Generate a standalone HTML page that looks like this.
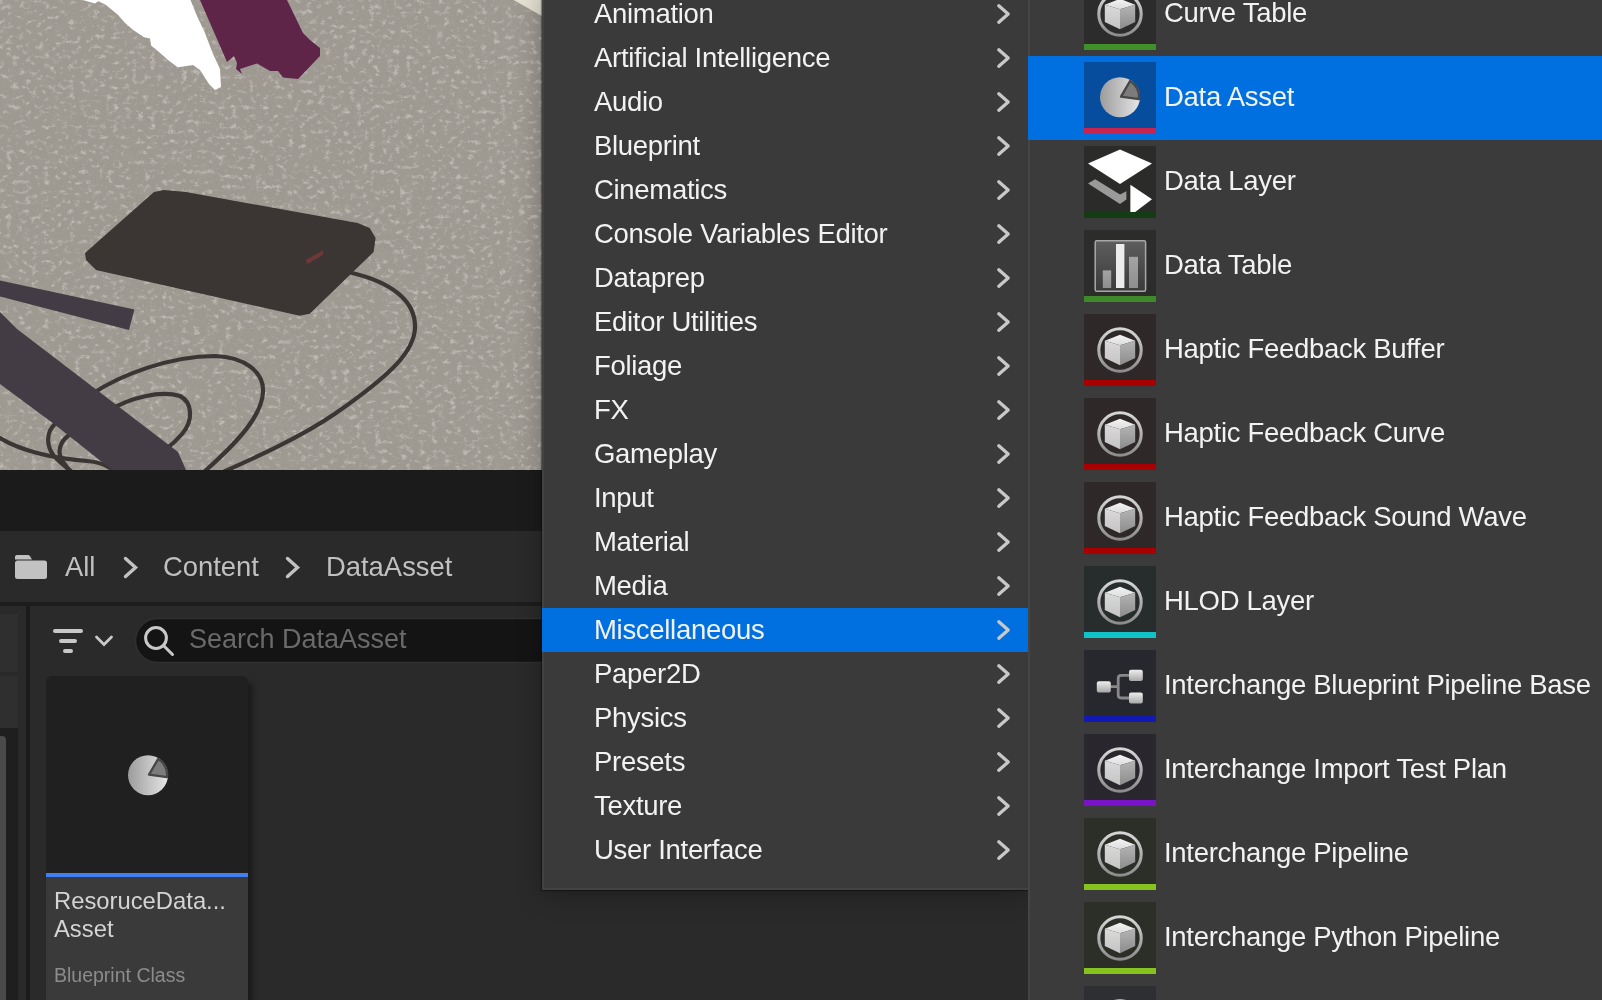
<!DOCTYPE html>
<html><head><meta charset="utf-8">
<style>
*{margin:0;padding:0;box-sizing:border-box}
html,body{-webkit-font-smoothing:antialiased;width:1602px;height:1000px;overflow:hidden;background:#232323;font-family:"Liberation Sans",sans-serif}
.a{position:absolute}
#vp{left:0;top:0;width:542px;height:470px;background:#a6a199;overflow:hidden}
#vp svg{display:block}
#dbar{left:0;top:470px;width:542px;height:61px;background:#1b1b1b}
#crumb{left:0;top:531px;width:542px;height:71px;background:#2a2a2a}
#sep{left:0;top:602px;width:542px;height:4px;background:#1d1d1d}
#left{left:0;top:606px;width:26px;height:394px;background:#2a2a2a;overflow:hidden}
#vsep{left:26px;top:606px;width:4px;height:394px;background:#1b1b1b}
#main{left:30px;top:606px;width:1000px;height:394px;background:#2a2a2a;overflow:hidden}
#tile{left:16px;top:70px;width:202px;height:330px}
.ct{will-change:transform;color:#c0c0c0;font-size:27.4px;line-height:30px;white-space:nowrap}
#m1{left:542px;top:-10px;width:488px;height:900px;background:#3a3a3a;border:2px solid #424242;border-top:none;box-shadow:0 4px 24px rgba(0,0,0,.3),0 0 1px 1px rgba(0,0,0,.35)}
#m1 .mi{position:absolute;left:-2px;width:486px;height:44px;line-height:44px;font-size:27.5px;letter-spacing:-0.3px;color:#f2f2f2;white-space:nowrap;margin-top:10px}
.mi span{will-change:transform;position:absolute;left:52px;top:0}
#m2{left:1028px;top:0;width:574px;height:1000px;background:#3b3b3b;overflow:hidden}
.hl{background:#0070e0}
.ri{position:absolute;left:0;width:574px;height:84px}
.ri .ic{position:absolute;left:56px;top:6px;width:72px;height:72px}
.ri .ic svg{position:absolute;left:0;top:0}
.ri .bar{position:absolute;left:0;top:66px;width:72px;height:6px}
.ri span{will-change:transform;position:absolute;left:136px;top:-1.5px;line-height:84px;font-size:27.5px;letter-spacing:-0.3px;color:#f2f2f2;white-space:nowrap}

.gs{will-change:transform}

</style></head><body>
<svg width="0" height="0" style="position:absolute">
<defs>
<linearGradient id="gTop" x1="0" y1="0" x2="0" y2="1"><stop offset="0" stop-color="#f4f4f4"/><stop offset="1" stop-color="#dcdcdc"/></linearGradient>
<linearGradient id="gL" x1="0" y1="0" x2="0" y2="1"><stop offset="0" stop-color="#dadada"/><stop offset="1" stop-color="#c4c4c4"/></linearGradient>
<linearGradient id="gR" x1="0" y1="0" x2="0" y2="1"><stop offset="0" stop-color="#b4b4b4"/><stop offset="1" stop-color="#8c8c8c"/></linearGradient>
<linearGradient id="gRing" x1="0" y1="0" x2="0" y2="1"><stop offset="0" stop-color="#d6d6d6"/><stop offset="1" stop-color="#8c8c8c"/></linearGradient>
<linearGradient id="gPie" x1="0" y1="0" x2="1" y2="0"><stop offset="0" stop-color="#9c9c9c"/><stop offset="1" stop-color="#e6e6e6"/></linearGradient>
<linearGradient id="gTab" x1="0" y1="0" x2="0" y2="1"><stop offset="0" stop-color="#5e5e5e"/><stop offset="1" stop-color="#3a3a3a"/></linearGradient>
<linearGradient id="gBar" x1="0" y1="0" x2="0" y2="1"><stop offset="0" stop-color="#a4a4a4"/><stop offset="1" stop-color="#8e8e8e"/></linearGradient>
<linearGradient id="gBox" x1="0" y1="0" x2="0" y2="1"><stop offset="0" stop-color="#eeeeee"/><stop offset="1" stop-color="#a8a8a8"/></linearGradient>
<g id="i-cube">
 <circle cx="36" cy="36" r="21.2" fill="none" stroke="url(#gRing)" stroke-width="3.1"/>
 <path d="M36 20.8 L51.2 26.8 L36 31.2 L20.8 26.8 Z" fill="url(#gTop)"/>
 <path d="M20.8 26.8 L36 31.2 L36 51.2 L20.8 44 Z" fill="url(#gL)"/>
 <path d="M51.2 26.8 L36 31.2 L36 51.2 L51.2 44 Z" fill="url(#gR)"/>
</g>
<g id="i-pie">
 <circle cx="36.0" cy="35.2" r="20" fill="url(#gPie)"/>
 <path d="M37.00 34.60 L46.18 18.91 A18.9 18.9 0 0 1 55.08 37.16 Z" fill="#7c7c7c" stroke="#474747" stroke-width="2.3" stroke-linejoin="round"/>
</g>
<g id="i-layer">
 <path d="M36 3.6 L68 17.6 L36 38 L4 17.6 Z" fill="#ffffff"/>
 <path d="M4 37.6 L11.2 33.2 L36 48.4 L42.4 45.2 L42.4 53.6 L36 58 Z" fill="#9a9a9a"/>
 <path d="M46.4 38.8 L68 53.2 L51.2 66 L46.4 66 Z" fill="#ffffff"/>
</g>
<g id="i-table">
 <rect x="11.2" y="10.8" width="50.4" height="50.4" rx="1.5" fill="url(#gTab)" stroke="#a8a8a8" stroke-width="1.5"/>
 <rect x="18.8" y="40.4" width="8.4" height="17.6" fill="url(#gBar)"/>
 <rect x="32" y="14" width="8.4" height="44" fill="#ececec"/>
 <rect x="45" y="26.8" width="9" height="31.2" fill="url(#gBar)"/>
</g>
<g id="i-graph">
 <path d="M26 36.6 L34.2 36.6 M46 25.4 L37.2 25.4 Q34.2 25.4 34.2 28.4 L34.2 45 Q34.2 48 37.2 48 L46 48" fill="none" stroke="#888888" stroke-width="2.8"/>
 <rect x="12.8" y="31.2" width="14" height="11.2" rx="2" fill="url(#gBox)"/>
 <rect x="45" y="19.8" width="13.8" height="11.2" rx="2" fill="url(#gBox)"/>
 <rect x="45" y="42.4" width="13.8" height="11.2" rx="2" fill="url(#gBox)"/>
</g>
</defs></svg>

<div class="a" id="vp"><svg width="542" height="470" viewBox="0 0 542 470">
 <defs>
  <filter id="nz" x="0" y="0" width="100%" height="100%">
   <feTurbulence type="fractalNoise" baseFrequency="0.16 0.2" numOctaves="3" seed="11" result="t"/>
   <feColorMatrix in="t" type="matrix" values="0 0 0 0 0.82  0 0 0 0 0.81  0 0 0 0 0.79  3.6 0 0 0 -1.95" result="w"/>
   <feTurbulence type="fractalNoise" baseFrequency="0.5" numOctaves="1" seed="5" result="t2"/>
   <feColorMatrix in="t2" type="matrix" values="0 0 0 0 0.3  0 0 0 0 0.28  0 0 0 0 0.26  0 -7 0 0 2.62" result="k"/>
   <feTurbulence type="fractalNoise" baseFrequency="0.06" numOctaves="2" seed="2" result="t3"/>
   <feColorMatrix in="t3" type="matrix" values="0 0 0 0 0.45  0 0 0 0 0.43  0 0 0 0 0.4  0 0 -1.2 0 0.55" result="m"/>
   <feMerge><feMergeNode in="m"/><feMergeNode in="w"/><feMergeNode in="k"/></feMerge>
  </filter>
 </defs>
 <rect width="542" height="470" fill="#9e9991"/>
 <rect width="542" height="470" fill="#000" filter="url(#nz)" opacity="0.42"/>
 <path d="M513.6 0 L542 0 L542 16 Z" fill="#e4e1d2"/>
 <path d="M82.8 0 L94.8 3.6 L98.4 1.2 L105.6 4.8 L117.6 14.4 L124.8 22.8 L133.2 30 L144 37.2 L150 38.4 L151.2 45.6 L158.4 51.6 L168 60 L177.6 67.2 L180 67 L193 65 L200 70 L209 84 L215 90 L221 87 L220 69 L213 54 L205 33 L197 16 L190.5 0 Z" fill="#ffffff"/>
 <path d="M200 0 L227 62 L234 56 L237 63 L236 69 L242 74 L240 69 L257 63.5 L270 71 L278 71 L283 77.5 L298 79 L320 56 L320 48 L310 40 L303 33 L287 0 Z" fill="#5e2548"/>
 <path d="M85 253 L154 192 L164 190 L186 192 L357.7 223 L369.7 228 L375.6 238 L373.6 252 L309.7 313.8 L299.7 315.8 L96 270 L86 260 Z" fill="#3b3634"/>
 <path d="M305.7 260 L323.7 250 L322.7 255 L307.7 264 Z" fill="#6e3838"/>
 <g fill="none" stroke="#3b3634" stroke-width="4.2" stroke-linecap="round">
  <path d="M352 273 C390 282, 416 300, 415 328 C414 350, 395 372, 336 413 C300 438, 250 460, 214 476"/>
  <path d="M92 394 C120 375, 170 356, 215 356 C245 357, 264 372, 263 392 C262 415, 240 440, 204 472"/>
  <path d="M110 410 C130 398, 160 390, 180 396 C192 402, 194 420, 182 434 C176 441, 170 446, 166 449"/>
  <path d="M0 438 C20 450, 50 458, 87 461 C100 462, 108 465, 115 472"/>
  <path d="M55 424 C46 432, 46 446, 54 456 C60 463, 66 467, 72 472"/>
  <path d="M68 436 C60 442, 57 452, 62 460 C65 465, 68 468, 70 472"/>
 </g>
 <path d="M0 280.4 L134.4 309.5 L129 330 L0 296.6 Z" fill="#433c45"/>
 <path d="M0 312 L17 329 L178 452 L186 470 L112 470 L54 424 L0 384 Z" fill="#433c45"/>
</svg>
</div>
<div class="a" id="dbar"></div>
<div class="a" id="crumb">
 <svg class="a" style="left:0;top:0" width="542" height="71" viewBox="0 0 542 71">
  <path d="M15 28.4 L15 26 Q15 24 17 24 L28 24 Q29.2 24 30 25.2 L32 28.4 Z" fill="#c2c2c2"/>
  <rect x="15" y="29.6" width="32" height="18.4" rx="2.5" fill="#c2c2c2"/>
  <path d="M125.5 27.5 L135.5 36.5 L125.5 45.5" fill="none" stroke="#c2c2c2" stroke-width="3.4" stroke-linecap="round"/>
  <path d="M287.5 27.5 L297.5 36.5 L287.5 45.5" fill="none" stroke="#c2c2c2" stroke-width="3.4" stroke-linecap="round"/>
 </svg>
 <span class="a ct" style="left:64.5px;top:21px">All</span>
 <span class="a ct" style="left:163px;top:21px">Content</span>
 <span class="a ct" style="left:325.5px;top:21px">DataAsset</span>
</div>
<div class="a" id="sep"></div>
<div class="a" id="left">
 <div class="a" style="left:0;top:8px;width:18px;height:58px;background:#2f2f2f"></div>
 <div class="a" style="left:0;top:70px;width:18px;height:52px;background:#2f2f2f"></div>
 <div class="a" style="left:0;top:122px;width:18px;height:272px;background:#1f1f1f"></div>
 <div class="a" style="left:-6px;top:130px;width:12px;height:270px;background:#4a4a4a;border-radius:4px"></div>
</div>
<div class="a" id="vsep"></div>
<div class="a" id="main">
 <svg class="a" style="left:0;top:0" width="512" height="394" viewBox="30 606 512 394">
  <path d="M55 631 L81 631 M61 641 L75 641 M65 651 L71 651" stroke="#c8c8c8" stroke-width="4" stroke-linecap="round"/>
  <path d="M96.5 637 L104 644.5 L111.5 637" fill="none" stroke="#c8c8c8" stroke-width="2.8" stroke-linecap="round"/>
  <rect x="135.5" y="618.5" width="450" height="44" rx="22" fill="#141414" stroke="#303030" stroke-width="1.5"/>
  <circle cx="156" cy="638" r="10.4" fill="none" stroke="#c8c8c8" stroke-width="3"/>
  <path d="M163.5 645.5 L172.5 654.5" stroke="#c8c8c8" stroke-width="3" stroke-linecap="round"/>
 </svg>
 <span class="a gs" style="left:159px;top:18px;font-size:27px;line-height:30px;color:#6a6a6a;white-space:nowrap">Search DataAsset</span>
 <div class="a" id="tile">
  <div class="a" style="left:0;top:0;width:202px;height:330px;background:#202020;border-radius:6px 6px 0 0;box-shadow:5px 6px 5px rgba(0,0,0,.35)"></div>
  <svg class="a" style="left:65.5px;top:64px" width="72" height="72" viewBox="0 0 72 72"><use href="#i-pie"/></svg>
  <div class="a" style="left:0;top:197px;width:202px;height:4px;background:#3f7ff2"></div>
  <div class="a" style="left:0;top:201px;width:202px;height:200px;background:#3a3a3a"></div>
  <div class="a gs" style="left:8.3px;top:210.5px;font-size:23.8px;line-height:28px;color:#d4d4d4;white-space:nowrap">ResoruceData...<br>Asset</div>
  <div class="a gs" style="left:8.3px;top:288px;font-size:19.5px;line-height:22px;color:#8c8c8c;white-space:nowrap">Blueprint Class</div>
 </div>
</div>

<div class="a" id="m1">
<div class="mi" style="top:-8px"><span>Animation</span><svg class="chev" width="20" height="24" viewBox="0 0 20 24" style="position:absolute;left:450px;top:10px"><path d="M6.8 3.8 L16.2 12 L6.8 20.2" fill="none" stroke="#c8c8c8" stroke-width="3.3" stroke-linecap="round" stroke-linejoin="round"/></svg></div><div class="mi" style="top:36px"><span>Artificial Intelligence</span><svg class="chev" width="20" height="24" viewBox="0 0 20 24" style="position:absolute;left:450px;top:10px"><path d="M6.8 3.8 L16.2 12 L6.8 20.2" fill="none" stroke="#c8c8c8" stroke-width="3.3" stroke-linecap="round" stroke-linejoin="round"/></svg></div><div class="mi" style="top:80px"><span>Audio</span><svg class="chev" width="20" height="24" viewBox="0 0 20 24" style="position:absolute;left:450px;top:10px"><path d="M6.8 3.8 L16.2 12 L6.8 20.2" fill="none" stroke="#c8c8c8" stroke-width="3.3" stroke-linecap="round" stroke-linejoin="round"/></svg></div><div class="mi" style="top:124px"><span>Blueprint</span><svg class="chev" width="20" height="24" viewBox="0 0 20 24" style="position:absolute;left:450px;top:10px"><path d="M6.8 3.8 L16.2 12 L6.8 20.2" fill="none" stroke="#c8c8c8" stroke-width="3.3" stroke-linecap="round" stroke-linejoin="round"/></svg></div><div class="mi" style="top:168px"><span>Cinematics</span><svg class="chev" width="20" height="24" viewBox="0 0 20 24" style="position:absolute;left:450px;top:10px"><path d="M6.8 3.8 L16.2 12 L6.8 20.2" fill="none" stroke="#c8c8c8" stroke-width="3.3" stroke-linecap="round" stroke-linejoin="round"/></svg></div><div class="mi" style="top:212px"><span>Console Variables Editor</span><svg class="chev" width="20" height="24" viewBox="0 0 20 24" style="position:absolute;left:450px;top:10px"><path d="M6.8 3.8 L16.2 12 L6.8 20.2" fill="none" stroke="#c8c8c8" stroke-width="3.3" stroke-linecap="round" stroke-linejoin="round"/></svg></div><div class="mi" style="top:256px"><span>Dataprep</span><svg class="chev" width="20" height="24" viewBox="0 0 20 24" style="position:absolute;left:450px;top:10px"><path d="M6.8 3.8 L16.2 12 L6.8 20.2" fill="none" stroke="#c8c8c8" stroke-width="3.3" stroke-linecap="round" stroke-linejoin="round"/></svg></div><div class="mi" style="top:300px"><span>Editor Utilities</span><svg class="chev" width="20" height="24" viewBox="0 0 20 24" style="position:absolute;left:450px;top:10px"><path d="M6.8 3.8 L16.2 12 L6.8 20.2" fill="none" stroke="#c8c8c8" stroke-width="3.3" stroke-linecap="round" stroke-linejoin="round"/></svg></div><div class="mi" style="top:344px"><span>Foliage</span><svg class="chev" width="20" height="24" viewBox="0 0 20 24" style="position:absolute;left:450px;top:10px"><path d="M6.8 3.8 L16.2 12 L6.8 20.2" fill="none" stroke="#c8c8c8" stroke-width="3.3" stroke-linecap="round" stroke-linejoin="round"/></svg></div><div class="mi" style="top:388px"><span>FX</span><svg class="chev" width="20" height="24" viewBox="0 0 20 24" style="position:absolute;left:450px;top:10px"><path d="M6.8 3.8 L16.2 12 L6.8 20.2" fill="none" stroke="#c8c8c8" stroke-width="3.3" stroke-linecap="round" stroke-linejoin="round"/></svg></div><div class="mi" style="top:432px"><span>Gameplay</span><svg class="chev" width="20" height="24" viewBox="0 0 20 24" style="position:absolute;left:450px;top:10px"><path d="M6.8 3.8 L16.2 12 L6.8 20.2" fill="none" stroke="#c8c8c8" stroke-width="3.3" stroke-linecap="round" stroke-linejoin="round"/></svg></div><div class="mi" style="top:476px"><span>Input</span><svg class="chev" width="20" height="24" viewBox="0 0 20 24" style="position:absolute;left:450px;top:10px"><path d="M6.8 3.8 L16.2 12 L6.8 20.2" fill="none" stroke="#c8c8c8" stroke-width="3.3" stroke-linecap="round" stroke-linejoin="round"/></svg></div><div class="mi" style="top:520px"><span>Material</span><svg class="chev" width="20" height="24" viewBox="0 0 20 24" style="position:absolute;left:450px;top:10px"><path d="M6.8 3.8 L16.2 12 L6.8 20.2" fill="none" stroke="#c8c8c8" stroke-width="3.3" stroke-linecap="round" stroke-linejoin="round"/></svg></div><div class="mi" style="top:564px"><span>Media</span><svg class="chev" width="20" height="24" viewBox="0 0 20 24" style="position:absolute;left:450px;top:10px"><path d="M6.8 3.8 L16.2 12 L6.8 20.2" fill="none" stroke="#c8c8c8" stroke-width="3.3" stroke-linecap="round" stroke-linejoin="round"/></svg></div><div class="mi hl" style="top:608px"><span>Miscellaneous</span><svg class="chev" width="20" height="24" viewBox="0 0 20 24" style="position:absolute;left:450px;top:10px"><path d="M6.8 3.8 L16.2 12 L6.8 20.2" fill="none" stroke="#c8c8c8" stroke-width="3.3" stroke-linecap="round" stroke-linejoin="round"/></svg></div><div class="mi" style="top:652px"><span>Paper2D</span><svg class="chev" width="20" height="24" viewBox="0 0 20 24" style="position:absolute;left:450px;top:10px"><path d="M6.8 3.8 L16.2 12 L6.8 20.2" fill="none" stroke="#c8c8c8" stroke-width="3.3" stroke-linecap="round" stroke-linejoin="round"/></svg></div><div class="mi" style="top:696px"><span>Physics</span><svg class="chev" width="20" height="24" viewBox="0 0 20 24" style="position:absolute;left:450px;top:10px"><path d="M6.8 3.8 L16.2 12 L6.8 20.2" fill="none" stroke="#c8c8c8" stroke-width="3.3" stroke-linecap="round" stroke-linejoin="round"/></svg></div><div class="mi" style="top:740px"><span>Presets</span><svg class="chev" width="20" height="24" viewBox="0 0 20 24" style="position:absolute;left:450px;top:10px"><path d="M6.8 3.8 L16.2 12 L6.8 20.2" fill="none" stroke="#c8c8c8" stroke-width="3.3" stroke-linecap="round" stroke-linejoin="round"/></svg></div><div class="mi" style="top:784px"><span>Texture</span><svg class="chev" width="20" height="24" viewBox="0 0 20 24" style="position:absolute;left:450px;top:10px"><path d="M6.8 3.8 L16.2 12 L6.8 20.2" fill="none" stroke="#c8c8c8" stroke-width="3.3" stroke-linecap="round" stroke-linejoin="round"/></svg></div><div class="mi" style="top:828px"><span>User Interface</span><svg class="chev" width="20" height="24" viewBox="0 0 20 24" style="position:absolute;left:450px;top:10px"><path d="M6.8 3.8 L16.2 12 L6.8 20.2" fill="none" stroke="#c8c8c8" stroke-width="3.3" stroke-linecap="round" stroke-linejoin="round"/></svg></div>
</div>

<div class="a" id="m2">
<div class="a" style="left:0;top:0;width:2px;height:1000px;background:#454545"></div>
<div class="ri" style="top:-28px"><div class="ic" style="background:#2c2c2c"><svg width="72" height="66" viewBox="0 0 72 66"><use href="#i-cube"/></svg><div class="bar" style="background:#3f8f2a"></div></div><span>Curve Table</span></div><div class="ri hl" style="top:56px"><div class="ic" style="background:#074d9e"><svg width="72" height="66" viewBox="0 0 72 66"><use href="#i-pie"/></svg><div class="bar" style="background:#c9244f"></div></div><span>Data Asset</span></div><div class="ri" style="top:140px"><div class="ic" style="background:#2b2c2a"><svg width="72" height="66" viewBox="0 0 72 66"><use href="#i-layer"/></svg><div class="bar" style="background:#143c14"></div></div><span>Data Layer</span></div><div class="ri" style="top:224px"><div class="ic" style="background:#2c2d2b"><svg width="72" height="66" viewBox="0 0 72 66"><use href="#i-table"/></svg><div class="bar" style="background:#3e8a2a"></div></div><span>Data Table</span></div><div class="ri" style="top:308px"><div class="ic" style="background:#2e2828"><svg width="72" height="66" viewBox="0 0 72 66"><use href="#i-cube"/></svg><div class="bar" style="background:#a80000"></div></div><span>Haptic Feedback Buffer</span></div><div class="ri" style="top:392px"><div class="ic" style="background:#2e2828"><svg width="72" height="66" viewBox="0 0 72 66"><use href="#i-cube"/></svg><div class="bar" style="background:#a80000"></div></div><span>Haptic Feedback Curve</span></div><div class="ri" style="top:476px"><div class="ic" style="background:#2e2828"><svg width="72" height="66" viewBox="0 0 72 66"><use href="#i-cube"/></svg><div class="bar" style="background:#a80000"></div></div><span>Haptic Feedback Sound Wave</span></div><div class="ri" style="top:560px"><div class="ic" style="background:#272d2d"><svg width="72" height="66" viewBox="0 0 72 66"><use href="#i-cube"/></svg><div class="bar" style="background:#12c2c9"></div></div><span>HLOD Layer</span></div><div class="ri" style="top:644px"><div class="ic" style="background:#27282d"><svg width="72" height="66" viewBox="0 0 72 66"><use href="#i-graph"/></svg><div class="bar" style="background:#1219b0"></div></div><span>Interchange Blueprint Pipeline Base</span></div><div class="ri" style="top:728px"><div class="ic" style="background:#2a262d"><svg width="72" height="66" viewBox="0 0 72 66"><use href="#i-cube"/></svg><div class="bar" style="background:#7a12c8"></div></div><span>Interchange Import Test Plan</span></div><div class="ri" style="top:812px"><div class="ic" style="background:#2c2e28"><svg width="72" height="66" viewBox="0 0 72 66"><use href="#i-cube"/></svg><div class="bar" style="background:#86c31e"></div></div><span>Interchange Pipeline</span></div><div class="ri" style="top:896px"><div class="ic" style="background:#2c2e28"><svg width="72" height="66" viewBox="0 0 72 66"><use href="#i-cube"/></svg><div class="bar" style="background:#86c31e"></div></div><span>Interchange Python Pipeline</span></div><div class="ri" style="top:980px"><div class="ic" style="background:#2e2f33"><svg width="72" height="66" viewBox="0 0 72 66"><use href="#i-cube"/></svg><div class="bar" style="background:#3a3a3a"></div></div><span></span></div>
</div>
</body></html>
